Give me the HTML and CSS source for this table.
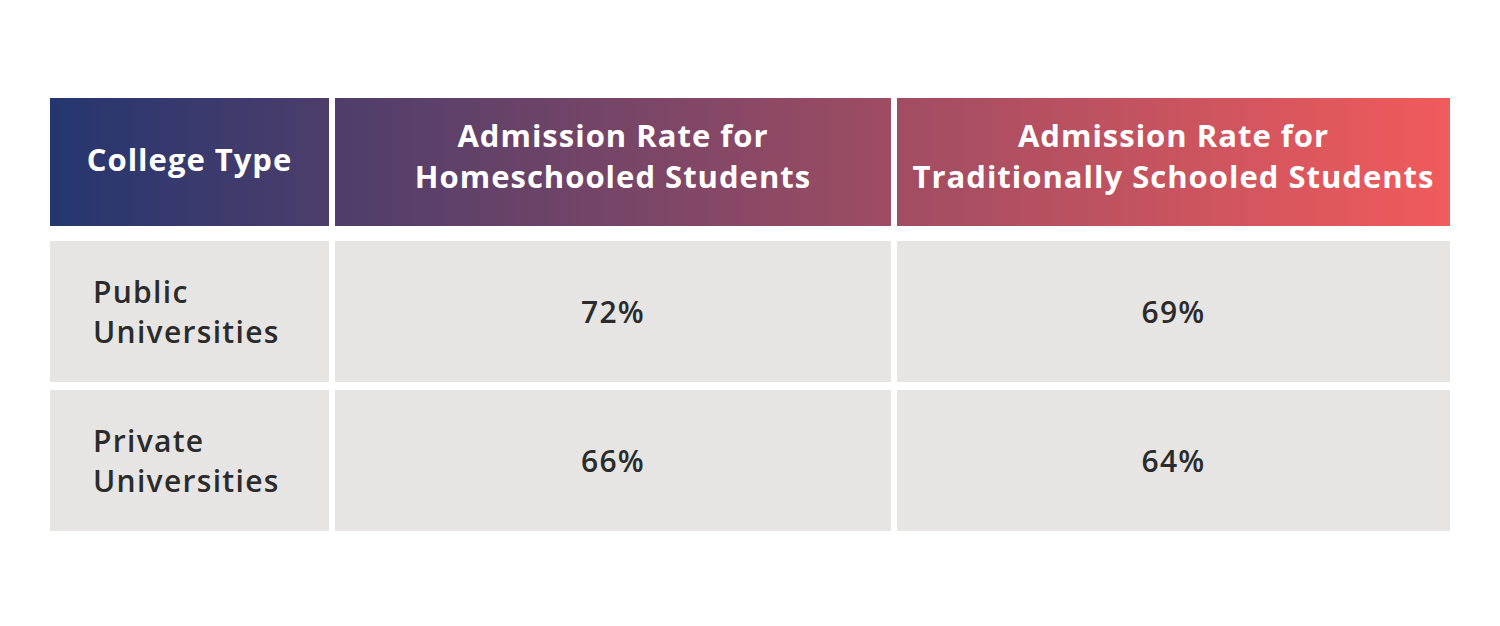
FILE: index.html
```html
<!DOCTYPE html>
<html lang="en">
<head>
<meta charset="utf-8">
<title>Admission Rates</title>
<link rel="stylesheet" href="styles.css">
</head>
<body>
<div class="page">
  <div class="head-row">
    <div class="head head-1">College Type</div>
    <div class="head head-2 two-line">Admission Rate for<br>Homeschooled Students</div>
    <div class="head head-3 two-line">Admission Rate for<br>Traditionally Schooled Students</div>
  </div>
  <div class="body-rows">
    <div class="cell label">Public<br>Universities</div>
    <div class="cell num">72%</div>
    <div class="cell num">69%</div>

    <div class="cell label">Private<br>Universities</div>
    <div class="cell num">66%</div>
    <div class="cell num">64%</div>
  </div>
</div>
</body>
</html>
```
FILE: styles.css
```css
html, body {
  margin: 0;
  padding: 0;
  background: #ffffff;
}
.page {
  padding: 98px 50px 0 50px;
  width: 1400px;
  font-family: "Open Sans", "Liberation Sans", sans-serif;
}
.head-row,
.body-rows {
  display: grid;
  grid-template-columns: 279px 556px 553px;
  column-gap: 6px;
}
.head-row {
  grid-template-rows: 128px;
}
.body-rows {
  margin-top: 15px;
  grid-template-rows: 141px 141px;
  row-gap: 8px;
}
.head {
  color: #ffffff;
  font-weight: 700;
  font-size: 31px;
  line-height: 41px;
  letter-spacing: 1px;
  text-align: center;
  display: flex;
  align-items: center;
  justify-content: center;
  background-image: linear-gradient(90deg, #24366f 0%, #f15b5b 100%);
  background-size: 1400px 100%;
  background-repeat: no-repeat;
  padding-bottom: 6px;
  box-sizing: border-box;
}
.head.two-line {
  padding-bottom: 13px;
}
.head-1 { background-position: 0 0; }
.head-2 { background-position: -285px 0; }
.head-3 { background-position: -847px 0; }
.cell {
  background: #e6e5e4;
  color: #2b2b2b;
  font-weight: 600;
  font-size: 30px;
  line-height: 40px;
  letter-spacing: 1.3px;
  display: flex;
  align-items: center;
}
.label {
  padding-left: 43px;
}
.num {
  justify-content: center;
}
```
